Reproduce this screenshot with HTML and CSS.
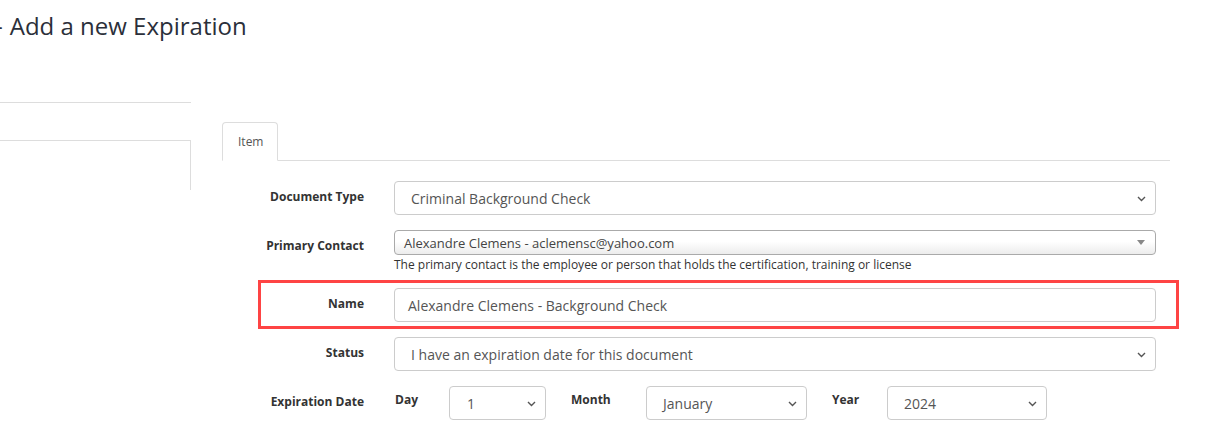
FILE: index.html
```html
<!DOCTYPE html>
<html lang="en">
<head>
<meta charset="utf-8">
<title>Add a new Expiration</title>
<link rel="stylesheet" href="styles.css">
</head>
<body>
<header class="page-header">
  <h1 class="page-title"><span class="crumb-sep">-</span>Add a new Expiration</h1>
</header>
<main class="layout">
  <aside class="sidebar">
    <div class="side-rule"></div>
    <div class="side-box"></div>
  </aside>
  <section class="content">
    <ul class="tabs">
      <li class="tab active">Item</li>
    </ul>
    <div class="tab-pane">
      <div class="form-row">
        <div class="label">Document Type</div>
        <div class="field">
          <div class="select">
            <span>Criminal Background Check</span>
            <svg class="chev" width="9" height="6" viewBox="0 0 9 6"><path d="M1 1l3.5 3.5L8 1" fill="none" stroke="#555" stroke-width="1.4"/></svg>
          </div>
        </div>
      </div>
      <div class="form-row">
        <div class="label">Primary Contact</div>
        <div class="field">
          <div class="combo">
            <span>Alexandre Clemens - aclemensc@yahoo.com</span>
            <svg class="tri" width="8" height="5" viewBox="0 0 8 5"><path d="M0 0h8L4 5z" fill="#888"/></svg>
          </div>
          <div class="help">The primary contact is the employee or person that holds the certification, training or license</div>
        </div>
      </div>
      <div class="form-row highlighted">
        <div class="label">Name</div>
        <div class="field">
          <div class="input">Alexandre Clemens - Background Check</div>
        </div>
      </div>
      <div class="form-row">
        <div class="label">Status</div>
        <div class="field">
          <div class="select">
            <span>I have an expiration date for this document</span>
            <svg class="chev" width="9" height="6" viewBox="0 0 9 6"><path d="M1 1l3.5 3.5L8 1" fill="none" stroke="#555" stroke-width="1.4"/></svg>
          </div>
        </div>
      </div>
      <div class="form-row">
        <div class="label">Expiration Date</div>
        <div class="field date-field">
          <div class="sub-label day-label">Day</div>
          <div class="select day">
            <span>1</span>
            <svg class="chev" width="9" height="6" viewBox="0 0 9 6"><path d="M1 1l3.5 3.5L8 1" fill="none" stroke="#555" stroke-width="1.4"/></svg>
          </div>
          <div class="sub-label month-label">Month</div>
          <div class="select month">
            <span>January</span>
            <svg class="chev" width="9" height="6" viewBox="0 0 9 6"><path d="M1 1l3.5 3.5L8 1" fill="none" stroke="#555" stroke-width="1.4"/></svg>
          </div>
          <div class="sub-label year-label">Year</div>
          <div class="select year">
            <span>2024</span>
            <svg class="chev" width="9" height="6" viewBox="0 0 9 6"><path d="M1 1l3.5 3.5L8 1" fill="none" stroke="#555" stroke-width="1.4"/></svg>
          </div>
        </div>
      </div>
    </div>
  </section>
</main>
</body>
</html>
```

FILE: styles.css
```css
* { box-sizing: border-box; }
html, body { margin: 0; padding: 0; background: #fff; }
body {
  font-family: "Open Sans", "Liberation Sans", sans-serif;
  color: #333;
  width: 1220px;
  height: 427px;
  overflow: hidden;
}
.page-header { height: 102px; }
.page-title {
  margin: 0;
  padding-top: 9px;
  font-size: 24px;
  line-height: 33px;
  font-weight: 400;
  color: #2b2f3a;
  margin-left: -5px;
  white-space: nowrap;
}
.crumb-sep { margin-right: 7px; }
.layout { display: flex; }
.sidebar { width: 191px; flex: none; }
.side-rule { border-top: 1px solid #ddd; height: 38px; }
.side-box { border-top: 1px solid #ddd; border-right: 1px solid #ddd; height: 50px; }
.content { margin-left: 31px; width: 950px; padding-top: 20px; }
.tabs {
  list-style: none;
  margin: 0;
  padding: 0;
  display: flex;
  border-bottom: 1px solid #ddd;
  width: 948px;
}
.tab {
  font-size: 12px;
  line-height: 17px;
  padding: 10px 14px 10px 15px;
  color: #555;
  border: 1px solid #ddd;
  border-bottom-color: transparent;
  border-radius: 4px 4px 0 0;
  margin-bottom: -1px;
  background: #fff;
}
.tab-pane { padding-top: 20px; }
.form-row {
  display: flex;
  align-items: flex-start;
  margin-bottom: 15px;
  position: relative;
}
.label {
  width: 142px;
  flex: none;
  text-align: right;
  font-size: 12px;
  font-weight: 700;
  line-height: 17px;
  padding-top: 7px;
  color: #333;
}
.field { margin-left: 30px; width: 762px; }
.select, .input {
  height: 34px;
  border: 1px solid #ccc;
  border-radius: 4px;
  display: flex;
  align-items: center;
  font-size: 14px;
  color: #555;
  background: #fff;
}
.select { padding: 0 9px 0 16px; justify-content: space-between; }
.select span { padding-top: 1px; }
.input { padding: 0 13px; }
.chev { flex: none; margin-top: 2px; }
.combo {
  height: 25px;
  border: 1px solid #aaa;
  border-radius: 4px;
  background: linear-gradient(#fff 0%, #fff 45%, #ececec 100%);
  display: flex;
  align-items: center;
  justify-content: space-between;
  padding: 0 10px 0 9px;
  font-size: 13px;
  color: #444;
}
.tri { flex: none; }
.help {
  font-size: 12px;
  line-height: 17px;
  color: #333;
  margin-top: 1px;
}
.highlighted::after {
  content: "";
  position: absolute;
  left: 36px;
  top: -8px;
  width: 915px;
  bottom: -7px;
  border: 3px solid #fe4444;
  pointer-events: none;
}
.date-field { display: flex; align-items: flex-start; }
.sub-label {
  font-size: 12px;
  font-weight: 700;
  line-height: 17px;
  padding-top: 5px;
  color: #333;
  flex: none;
}
.day-label { width: 55px; padding-left: 1px; }
.month-label { width: 75px; margin-left: 25px; }
.year-label { width: 55px; margin-left: 25px; }
.select.day { width: 97px; padding-left: 17px; }
.select.month { width: 161px; padding-left: 16px; }
.select.year { width: 160px; padding-left: 16px; }
```
